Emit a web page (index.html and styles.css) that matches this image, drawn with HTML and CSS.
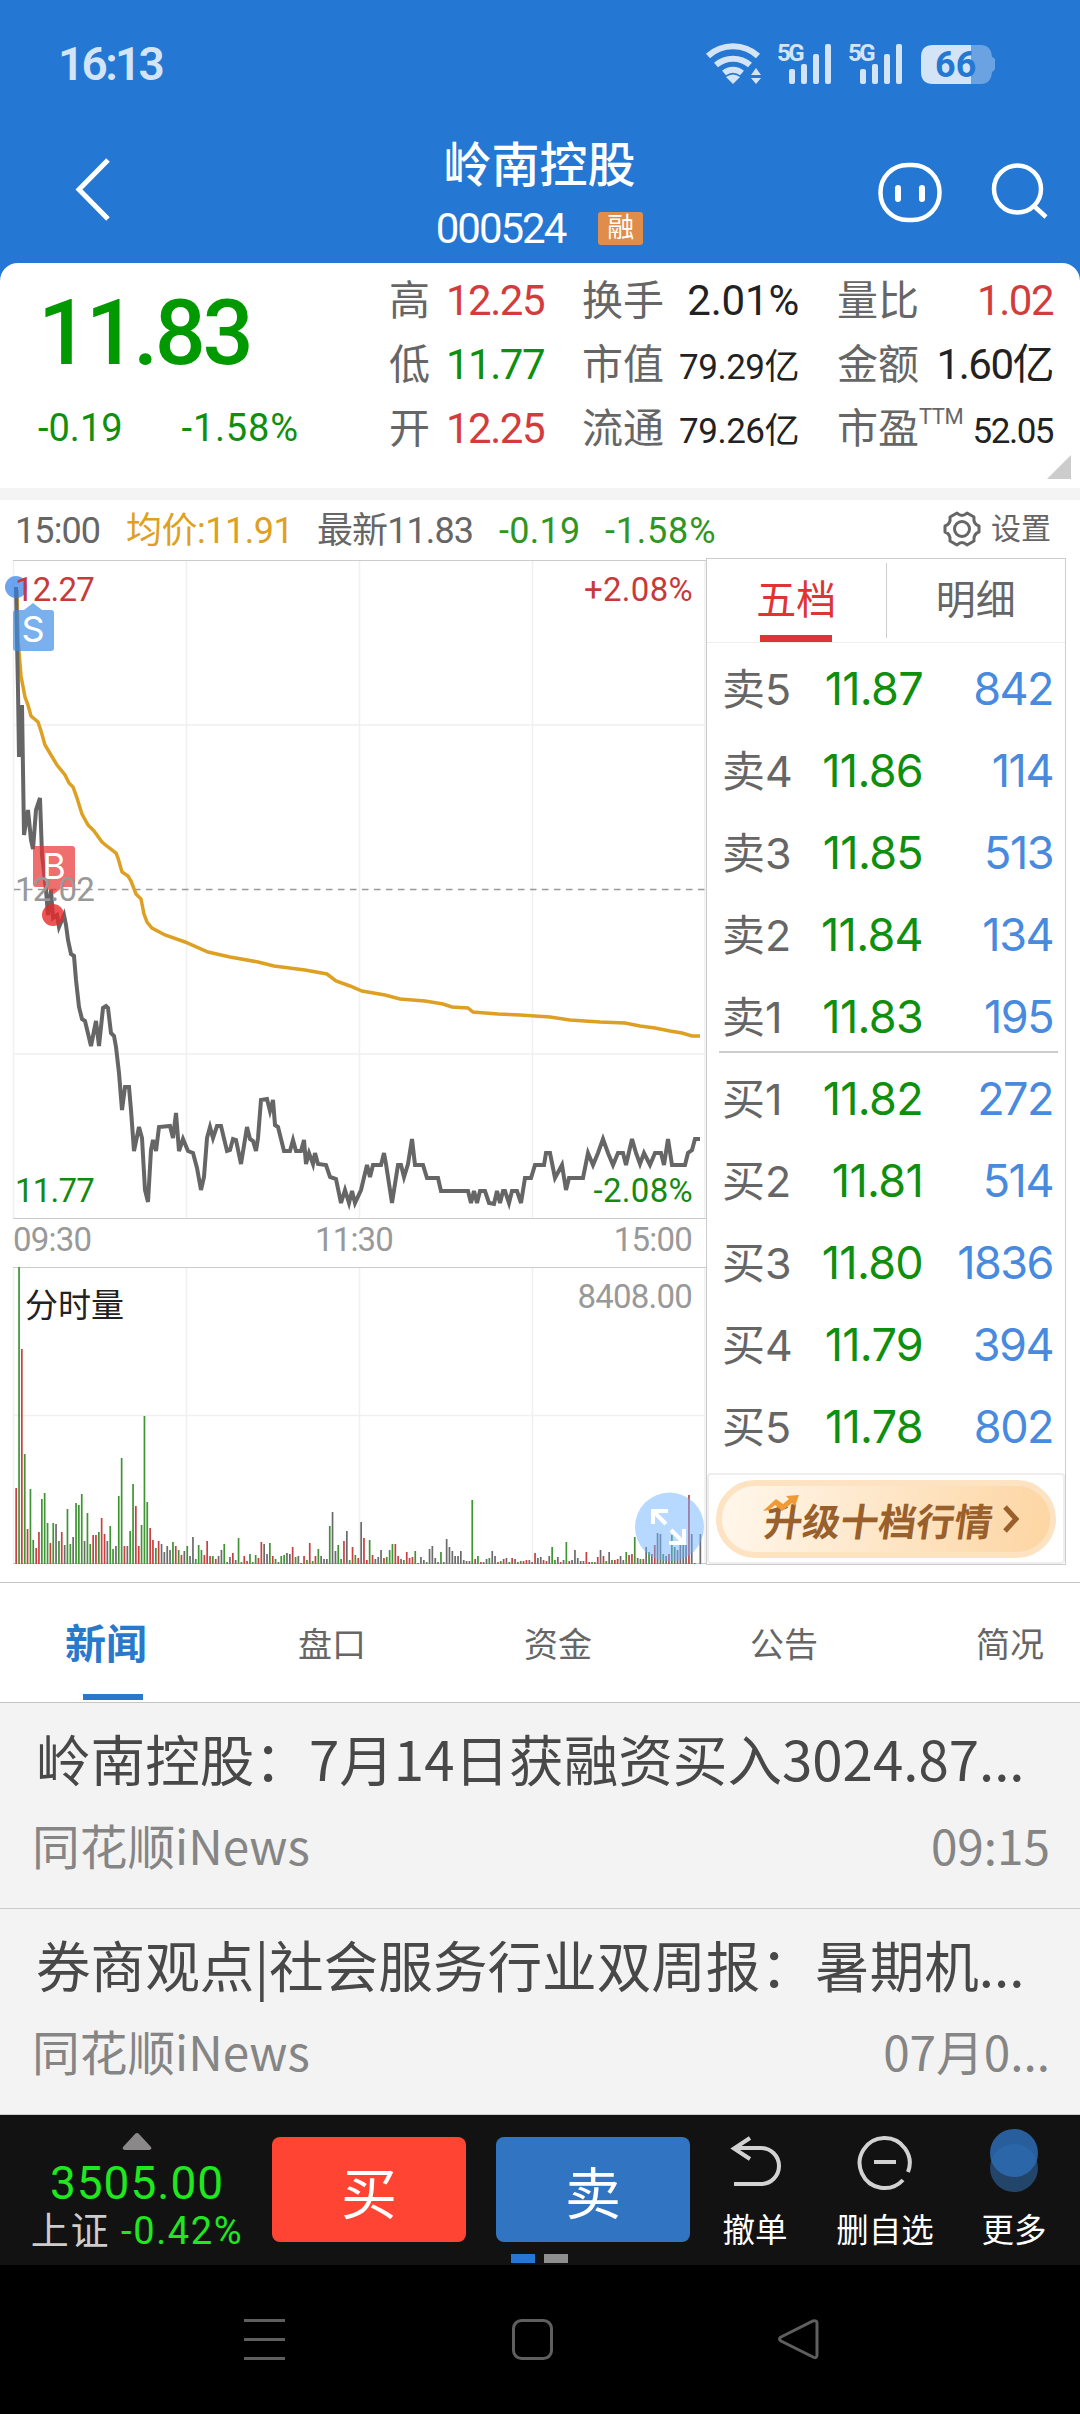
FILE: index.html
```html
<!doctype html>
<html lang="zh-CN">
  <head>
    <meta charset="UTF-8" />
    <meta name="viewport" content="width=device-width, initial-scale=1.0" />
    <title>岭南控股 000524</title>
    <link rel="stylesheet" href="styles.css">
  </head>

  <body>
    <div class="top">
      <div class="statusbar">
        <span class="clock">16:13</span>
        <svg class="status-icons" width="290" height="46" viewBox="705 40 290 46">
          <g fill="none" stroke="#d3e4f6" stroke-width="6">
            <path d="M708 56a37 37 0 0 1 50 0" />
            <path d="M716 65a26 26 0 0 1 34 0" />
            <path d="M724 73a14 14 0 0 1 18 0" />
          </g>
          <g fill="#d3e4f6">
            <path d="M726 77q7-5 14 0l-7 7z" />
            <path d="M751 75l5-7 5 7zM751 78h10l-5 6z" />
            <text class="net" x="777" y="61">5G</text>
            <rect x="789" y="69" width="6" height="15" rx="2" />
            <rect x="801" y="64" width="6" height="20" rx="2" />
            <rect x="813" y="54" width="6" height="30" rx="2" />
            <rect x="825" y="44" width="6" height="40" rx="2" />
            <text class="net" x="848" y="61">5G</text>
            <rect x="860" y="69" width="6" height="15" rx="2" />
            <rect x="872" y="64" width="6" height="20" rx="2" />
            <rect x="884" y="54" width="6" height="30" rx="2" />
            <rect x="896" y="44" width="6" height="40" rx="2" />
            <path d="M971 45H933q-12 0-12 12v15q0 12 12 12h38z" />
          </g>
          <path d="M971 45h10q10 0 11 12 4 1 4 7t-4 8q-1 12-11 12h-10z" fill="#6ba3e2" />
          <text class="battery" x="935" y="77">66</text>
        </svg>
      </div>
      <header class="header">
        <svg width="36" height="66" viewBox="75 157 36 66" class="back">
          <path d="M108 160L79 189.500 108 219" fill="none" stroke="#fff" stroke-width="5" />
        </svg>
        <div class="stock">
          <h1>岭南控股</h1>
          <div class="code">000524<span class="badge">融</span></div>
        </div>
        <svg width="172" height="64" viewBox="876 160 172 64" class="header-icons">
          <g fill="none" stroke="#fff" stroke-width="4.500">
            <rect x="880.500" y="165" width="59" height="55" rx="27" />
            <circle cx="1017.500" cy="189" r="23.500" />
            <path d="M1034 206l12 11" />
            <path d="M898 188v11M922 188v11" stroke-width="6" stroke-linecap="round" />
          </g>
        </svg>
      </header>
    </div>

    <section class="quote">
      <div class="price">
        <strong>11.83</strong>
        <div class="change"><span>-0.19</span><span>-1.58%</span></div>
      </div>
      <dl class="stats">
        <div><dt>高</dt><dd class="red">12.25</dd></div>
        <div><dt>换手</dt><dd class="wide">2.01%</dd></div>
        <div><dt>量比</dt><dd class="red">1.02</dd></div>
        <div><dt>低</dt><dd class="green">11.77</dd></div>
        <div><dt>市值</dt><dd class="small">79.29亿</dd></div>
        <div><dt>金额</dt><dd>1.60亿</dd></div>
        <div><dt>开</dt><dd class="red">12.25</dd></div>
        <div><dt>流通</dt><dd class="small">79.26亿</dd></div>
        <div><dt>市盈<sup>TTM</sup></dt><dd class="small pe">52.05</dd></div>
      </dl>
      <svg class="corner" width="24" height="24"><path d="M24 0v24H0z" fill="#ccc" /></svg>
    </section>

    <div class="infobar">
      <span class="t-time">15:00</span>
      <span class="t-avg">均价:11.91</span>
      <span class="t-last">最新11.83</span>
      <span class="t-diff">-0.19</span>
      <span class="t-pct">-1.58%</span>
      <span class="config">
        <svg width="38" height="38" viewBox="-19 -19 38 38" fill="none" stroke="#666" stroke-width="3">
          <path d="M-5-16Q0-11 5-16L12-12Q11-5 17-3V3Q11 5 12 12L5 16Q0 11-5 16L-12 12Q-11 5-17 3V-3Q-11-5-12-12Z" stroke-linejoin="round" />
          <circle r="7.500" />
        </svg>
        设置
      </span>
    </div>

    <div class="market">
      <svg class="chart" width="706" height="1006" viewBox="0 558 706 1006">
        <!-- grid -->
        <g fill="none" stroke="#f0f0f0" stroke-width="1.500">
          <path d="M13.500 560V1218M186.500 560V1218M359.500 560V1218M532.500 560V1218M705 560V1218" />
          <path d="M13.500 1267V1563M186.500 1267V1563M359.500 1267V1563M532.500 1267V1563M705 1267V1563" />
          <path d="M13 725H706M13 1054H706M13 1415.500H706" />
        </g>
        <path d="M13 560.500H706M13 1218.500H706M13 1267.500H706M13 1563.500H706" stroke="#ccc" />
        <path d="M14 889.500H706" stroke="#999" stroke-width="1.500" stroke-dasharray="6.500 5.500" />

        <polyline class="avg" points="17,590 18,640 21,676 25,697 28,705 31,716 38,722 41,731 45,745 51,755 57,765 65,775 69,783 73,787 77,798 82,814 88,825 94,831 102,842 108,847 116,853 118,858 122,872 128,876 131,881 136,894 141,899 144,914 147,922 152,928 165,935 185,942 208,952 230,957 258,962 274,966 305,970 327,974 336,981 350,986 362,991 385,995 400,999 425,1001 443,1004 452,1007 468,1008 473,1012 498,1014 520,1015 550,1017 570,1020 600,1022 625,1023 640,1026 655,1028 670,1031 682,1033 692,1036 700,1036" />
        <polyline class="last" points="16,587 17,640 18,690 19,757 22,705 24,835 28,810 31,840 33,849 36,810 40,798 42,855 46,890 48,915 51,890 53,918 57,915 59,927 64,915 66,925 68,940 71,954 74,956 76,980 79,1007 82,1019 85,1021 91,1046 96,1021 99,1046 103,1008 106,1006 108,1008 111,1033 114,1036 116,1047 119,1073 122,1110 125,1087 129,1087 131,1110 134,1151 139,1127 142,1138 145,1190 148,1202 151,1150 153,1140 156,1151 159,1127 170,1126 173,1138 176,1113 179,1151 183,1139 188,1151 193,1153 197,1168 201,1190 204,1177 207,1138 210,1127 213,1138 217,1126 221,1126 227,1151 230,1150 233,1139 236,1140 241,1164 247,1127 250,1139 253,1141 256,1151 258,1138 261,1100 267,1099 270,1111 273,1100 275,1125 278,1127 284,1151 290,1151 293,1140 296,1151 301,1151 304,1140 306,1164 309,1153 313,1164 315,1153 318,1164 326,1165 330,1177 336,1179 341,1203 345,1190 349,1203 352,1191 355,1203 361,1190 367,1165 370,1177 373,1165 381,1165 384,1153 386,1164 392,1203 398,1165 401,1165 404,1177 408,1164 412,1139 415,1165 423,1165 427,1178 438,1178 441,1191 468,1191 471,1203 474,1191 477,1203 480,1191 485,1191 489,1203 494,1204 497,1191 500,1203 503,1191 505,1191 509,1203 512,1191 517,1191 521,1203 525,1178 531,1178 535,1165 544,1165 546,1153 550,1153 555,1178 562,1165 566,1190 569,1178 583,1178 588,1153 593,1165 598,1153 603,1139 608,1153 613,1165 618,1153 623,1153 626,1165 632,1139 636,1153 640,1164 644,1153 650,1165 655,1153 661,1153 664,1165 668,1139 672,1165 685,1165 688,1153 692,1150 695,1139 700,1139" />

        <g id="volume"></g>

        <circle cx="16" cy="587" r="11" fill="#2d7fe6" fill-opacity="0.700" />
        <path d="M24 610l9-7 9 7h9q3 0 3 3v35q0 3-3 3H16q-3 0-3-3v-35q0-3 3-3z" fill="#3c8ae8" fill-opacity="0.680" />
        <text class="mark" x="33" y="642">S</text>
        <path d="M36 846h36q3 0 3 3v35q0 3-3 3h-9l-9 7-9-7h-9q-3 0-3-3v-35q0-3 3-3z" fill="#e83030" fill-opacity="0.700" />
        <text class="mark" x="54" y="879">B</text>
        <circle cx="53" cy="915" r="11" fill="#e62b2b" fill-opacity="0.800" />

        <g class="axis">
          <text x="15" y="601" class="fill-red">12.27</text>
          <text x="693" y="601" class="fill-red end pct">+2.08%</text>
          <text x="15" y="901">12.02</text>
          <text x="15" y="1202" class="fill-green">11.77</text>
          <text x="693" y="1202" class="fill-green end pct">-2.08%</text>
          <text x="13" y="1251">09:30</text>
          <text x="354" y="1251" class="middle">11:30</text>
          <text x="692" y="1251" class="end">15:00</text>
          <text x="692" y="1308" class="end">8408.00</text>
          <text x="25" y="1317" class="vol-title">分时量</text>
        </g>

        <circle cx="669.500" cy="1527" r="34.500" fill="#6fb1ff" fill-opacity="0.500" />
        <path d="M666 1524L653 1511M653 1524V1511H668M671 1530L684 1543M684 1529V1543H669" fill="none" stroke="#fff" stroke-width="4" />
      </svg>

      <aside class="book">
        <div class="book-tabs">
          <span class="active">五档</span>
          <span>明细</span>
        </div>
        <ul class="sell">
          <li><span>卖5</span><b>11.87</b><i>842</i></li>
          <li><span>卖4</span><b>11.86</b><i>114</i></li>
          <li><span>卖3</span><b>11.85</b><i>513</i></li>
          <li><span>卖2</span><b>11.84</b><i>134</i></li>
          <li><span>卖1</span><b>11.83</b><i>195</i></li>
        </ul>
        <ul class="buy">
          <li><span>买1</span><b>11.82</b><i>272</i></li>
          <li><span>买2</span><b>11.81</b><i>514</i></li>
          <li><span>买3</span><b>11.80</b><i>1836</i></li>
          <li><span>买4</span><b>11.79</b><i>394</i></li>
          <li><span>买5</span><b>11.78</b><i>802</i></li>
        </ul>
        <div class="upgrade">
          <div class="pill">
            <span>升级十档行情</span>
            <svg width="18" height="28" viewBox="0 0 18 28"><path d="M3 2l11 12L3 26" fill="none" stroke="#99602c" stroke-width="5" /></svg>
            <svg class="trend" width="36" height="18" viewBox="0 0 36 18"><path d="M0 16L13 4l7 5 6-5-3-3 13-1-4 11-3-3-10 8-7-6-6 5z" fill="#ef9a34" /></svg>
          </div>
        </div>
      </aside>
    </div>

    <nav class="tabs">
      <a class="active">新闻</a>
      <a>盘口</a>
      <a>资金</a>
      <a>公告</a>
      <a>简况</a>
    </nav>

    <main class="news">
      <article>
        <h2>岭南控股：7月14日获融资买入3024.87...</h2>
        <p><span>同花顺iNews</span><time>09:15</time></p>
      </article>
      <article>
        <h2>券商观点|社会服务行业双周报：暑期机...</h2>
        <p><span>同花顺iNews</span><time>07月0...</time></p>
      </article>
    </main>

    <footer class="trade">
      <div class="index">
        <svg width="30" height="18"><path d="M13 1q2-2 4 0l12 13q1 3-2 3H3q-3 0-2-3z" fill="#8a8888" /></svg>
        <strong>3505.00</strong>
        <p>上证 <em>-0.42%</em></p>
      </div>
      <button class="btn-buy">买</button>
      <button class="btn-sell">卖</button>
      <div class="action cancel">
        <svg width="56" height="64" viewBox="726 2126 56 64" fill="none" stroke="#d2d2d2" stroke-width="4">
          <path d="M749 2136l-16 10.500 16 10.500M733 2146h27a18 18 0 0 1 0 36h-27" />
        </svg>
        撤单
      </div>
      <div class="action remove">
        <svg width="60" height="64" viewBox="855 2126 60 64" fill="none" stroke="#d2d2d2" stroke-width="4">
          <path d="M908 2170a25 25 0 1 0-5 8M874 2160h22" />
        </svg>
        删自选
      </div>
      <div class="action more">
        <svg width="50" height="64" viewBox="989 2126 50 64">
          <circle cx="1014" cy="2166" r="24" fill="#234569" />
          <circle cx="1014" cy="2151" r="24" fill="#2d6cb5" fill-opacity="0.850" />
        </svg>
        更多
      </div>
      <div class="pager"><span class="on"></span><span></span></div>
    </footer>

    <div class="navbar">
      <svg width="1080" height="149" viewBox="0 2265 1080 149" fill="none" stroke="#5f5f5f" stroke-width="3">
        <path d="M244 2320.500h41M244 2339.500h41M244 2358.500h41" />
        <rect x="513.500" y="2320.500" width="38" height="38" rx="8" />
        <path d="M781 2337L813 2321q4-1 4 2v32q0 4-4 2L781 2341q-3-2 0-4z" />
      </svg>
    </div>
    <script src="chart.js"></script>
  </body>
</html>
```
FILE: chart.js
```javascript
// one bar per minute: height + direction (r up, g down, k flat)
const volume =
  "76r 297g 215r 110g 35r 75g 24g 16r 32r 65g 71g 41g 21r 41g 40k 23g 32r 19k 55g 20g " +
  "27k 61g 59g 70g 23k 51g 20g 29r 29r 32g 46r 30r 23k 38g 15g 18k 68g 106g 18r 18k " +
  "33g 80g 58r 18r 39g 148g 62g 36r 24r 16g 23r 20k 12k 18k 14k 22g 18r 14g 9r 13k " +
  "18g 8k 27k 5g 19g 14g 9r 23r 8r 8g 5r 8k 14k 20g 2g 7k 11r 4k 26g 2g " +
  "8r 3r 10g 2g 9g 6r 22r 20k 10k 21g 8r 5g 2k 8g 9g 11k 10k 17r 7g 8k " +
  "1r 8r 4g 21r 3g 8r 15g 8k 5k 5k 38g 52k 13k 19g 5g 23r 33k 4g 17r 9g " +
  "6r 42k 26r 4r 24g 9r 5k 7k 14k 6r 7g 14g 20g 20r 8r 5k 4g 12r 6r 7r " +
  "13g 1k 7k 4k 2g 15k 18k 6k 2k 12g 2k 25k 17k 13k 8k 8k 13k 4k 3k 3k " +
  "64g 5r 8g 2r 2k 5k 6g 13k 8k 2r 3g 5r 6k 2g 6r 5k 2k 3g 3r 4r " +
  "4k 2k 11r 6k 7k 4r 3r 8k 17g 4g 7k 2r 4k 22g 3r 4k 14k 6k 3k 3k " +
  "12r 2r 2g 2k 7r 14k 8r 3g 12k 4g 4r 5r 8k 4k 12g 9r 10r 27g 6k 5g " +
  "5r 17k 12g 10k 19r 31k 30k 10g 8k 10r 29g 17k 14k 21k 21k 19k 69r 30k 1r 0k 30k";

const colors = { r: "#c94040", g: "#3f9433", k: "#6b6b6b" };
const bars = volume.split(" ");
const step = 684.2 / (bars.length - 1);

document.getElementById("volume").innerHTML = bars
  .map((bar, i) => {
    const h = parseInt(bar, 10);
    const x = (15.3 + i * step).toFixed(1);
    return `<rect x="${x}" y="${1564 - h}" width="1.7" height="${h}" fill="${colors[bar.slice(-1)]}" />`;
  })
  .join("");
```
FILE: styles.css
```css
* {
  box-sizing: border-box;
}
body {
  margin: 0;
  width: 1080px;
  background: #fff;
  color: #222;
  font-family: Roboto, "Noto Sans CJK SC", sans-serif;
}
h1,
h2,
p,
ul,
dl,
dd {
  margin: 0;
  padding: 0;
}
svg {
  display: block;
  flex: none;
}
.red {
  color: #d23c3c;
}
.green {
  color: #0e8f0e;
}

/* blue top */
.top {
  height: 280px;
  background: #2477d3;
}
.statusbar {
  height: 126px;
  padding: 40px 85px 0 58px;
  display: flex;
  justify-content: space-between;
}
.clock {
  font-size: 46px;
  line-height: 48px;
  font-weight: 600;
  letter-spacing: -2.700px;
  color: #d3e4f6;
}
.net {
  font-size: 24px;
  font-weight: 700;
  letter-spacing: -2.500px;
}
.battery {
  font-size: 36px;
  font-weight: 700;
  fill: #2477d3;
}
.header {
  display: flex;
  height: 137px;
  padding: 0 32px 0 75px;
}
.back {
  margin-top: 31px;
}
.stock {
  flex: 1;
  padding-left: 92px;
  text-align: center;
  color: #fff;
}
.header-icons {
  margin-top: 34px;
}
h1 {
  padding-top: 4px;
  font-size: 48px;
  font-weight: 500;
  line-height: 72px;
}
.code {
  display: flex;
  justify-content: center;
  align-items: center;
  font-size: 42px;
  line-height: 53px;
  letter-spacing: -2px;
}
.badge {
  width: 45px;
  height: 33px;
  margin-left: 33px;
  border-radius: 3px;
  background: #e08d4b;
  font-size: 27px;
  line-height: 32px;
  letter-spacing: 0;
}

/* quote summary */
.quote {
  display: flex;
  position: relative;
  height: 225px;
  margin-top: -17px;
  border-radius: 18px 18px 0 0;
  background: #fff;
}
.price {
  width: 389px;
  padding: 15px 0 0 38px;
  color: #009a00;
}
.price strong {
  display: block;
  font-size: 90px;
  font-weight: 500;
  line-height: 112px;
  letter-spacing: -3.500px;
}
.change {
  display: flex;
  gap: 59px;
  margin-top: 16px;
  font-size: 38px;
  line-height: 44px;
  letter-spacing: 0.800px;
  color: #0e8f0e;
}
.change span:first-child {
  letter-spacing: 0;
}
.stats {
  display: grid;
  grid-template-columns: 155px 217px 216px;
  grid-auto-rows: 64px;
  column-gap: 38px;
  width: 664px;
  padding-top: 6px;
}
.stats div {
  display: flex;
  justify-content: space-between;
  align-items: baseline;
  line-height: 64px;
  white-space: nowrap;
}
dt {
  font-size: 41px;
  color: #666;
}
dd {
  font-size: 42px;
  letter-spacing: -1.500px;
}
dd.wide {
  letter-spacing: -0.200px;
}
dd.small {
  font-size: 35px;
  letter-spacing: -0.500px;
}
dd.pe {
  letter-spacing: -1.500px;
}
sup {
  display: inline-block;
  width: 40px;
  font-size: 22px;
  line-height: 22px;
  letter-spacing: -0.500px;
  vertical-align: 19px;
}
.corner {
  position: absolute;
  right: 9px;
  bottom: 9px;
}

/* line above chart */
.infobar {
  display: flex;
  height: 70px;
  border-top: 12px solid #f4f4f4;
  padding-left: 15px;
  font-size: 36px;
  line-height: 62px;
  letter-spacing: -0.900px;
  white-space: nowrap;
  color: #666;
}
.t-time {
  width: 111px;
}
.t-avg {
  width: 191px;
  letter-spacing: -0.500px;
  color: #dea022;
}
.t-last {
  width: 182px;
}
.t-diff {
  width: 106px;
  letter-spacing: 0.300px;
  color: #2f9622;
}
.t-pct {
  letter-spacing: 0.800px;
  color: #2f9622;
}
.config {
  display: flex;
  align-items: center;
  gap: 10px;
  margin-left: auto;
  margin-right: 29px;
  font-size: 30px;
  letter-spacing: 0;
}

/* chart and order book */
.market {
  display: flex;
  height: 1025px;
  border-bottom: 1px solid #c4c4c4;
}
.avg,
.last {
  fill: none;
  stroke: #dea022;
  stroke-width: 3.500;
}
.last {
  stroke: #666;
  stroke-width: 4;
}
.mark {
  font-size: 36px;
  font-family: Inter, sans-serif;
  fill: #fff;
  text-anchor: middle;
}
.axis {
  font-size: 33px;
  letter-spacing: -0.800px;
  fill: #999;
}
.axis .pct {
  letter-spacing: 0.300px;
}
.axis .fill-red {
  fill: #c83a3a;
}
.axis .fill-green {
  fill: #148a14;
}
.axis .end {
  text-anchor: end;
}
.axis .middle {
  text-anchor: middle;
}
.axis .vol-title {
  font-size: 33px;
  letter-spacing: 0;
  fill: #222;
}
.book {
  width: 360px;
  height: 1007px;
  border: 1px solid #ccc;
  font-family: Inter, "Noto Sans CJK SC", sans-serif;
}
.book-tabs {
  display: flex;
  height: 84px;
  border-bottom: 1px solid #eee;
}
.book-tabs span {
  flex: 1;
  padding-top: 11px;
  font-size: 40px;
  line-height: 60px;
  text-align: center;
  color: #666;
}
.book-tabs .active {
  color: #e03434;
}
.book-tabs .active::after {
  content: "";
  display: block;
  width: 72px;
  height: 7px;
  margin: 5px auto 0;
  background: #e03434;
}
.book-tabs span + span {
  height: 75px;
  margin-top: 4px;
  padding-top: 7px;
  border-left: 1px solid #ccc;
}
.book ul {
  list-style: none;
  margin: 0 7px 0 12px;
}
.book li {
  display: flex;
  height: 82px;
  padding: 0 5px 0 3px;
  font-size: 45px;
  line-height: 82px;
  letter-spacing: -1.500px;
}
.book li span {
  width: 84px;
  font-size: 43px;
  letter-spacing: 0;
  color: #666;
}
.book li b {
  width: 117px;
  font-weight: 400;
  letter-spacing: -0.700px;
  text-align: right;
  color: #0e8f0e;
}
.book li i {
  flex: 1;
  font-style: normal;
  text-align: right;
  color: #488ade;
}
.sell {
  padding-top: 5px;
  height: 410px;
  border-bottom: 2px solid #ccc;
}
.buy {
  padding-top: 5px;
}
.upgrade {
  height: 91px;
  margin-top: 5px;
  padding: 5px 7px;
  border: 2px solid #eee;
  border-radius: 4px;
}
.pill {
  display: flex;
  position: relative;
  align-items: center;
  height: 78px;
  padding-left: 43px;
  border: 6px solid #fde3c1;
  border-radius: 39px;
  background: linear-gradient(100deg, #fff7ec, #fdd5a2);
  font-size: 38px;
  font-weight: 700;
  color: #99602c;
}
.pill span {
  margin-right: 9px;
  transform: skewX(-8deg);
}
.trend {
  position: absolute;
  left: 41px;
  top: 9px;
}

/* section tabs */
.tabs {
  display: grid;
  grid-template-columns: repeat(5, 226px);
  height: 120px;
  border-bottom: 1px solid #c4c4c4;
  margin-left: -7px;
  width: 1087px;
  overflow: hidden;
  font-size: 34px;
  line-height: 124px;
  text-align: center;
  color: #666;
}
.tabs .active {
  position: relative;
  font-size: 41px;
  font-weight: 700;
  color: #2878cc;
}
.tabs .active::after {
  content: "";
  position: absolute;
  left: 90px;
  bottom: 7px;
  width: 60px;
  height: 6px;
  background: #2878cc;
}

/* news list */
.news {
  height: 412px;
  background: #f3f3f3;
  font-family: "Noto Sans CJK SC", sans-serif;
}
.news article {
  height: 206px;
  padding: 17px 30px 0 32px;
  border-bottom: 1px solid #ccc;
}
.news h2 {
  padding-left: 4px;
  font-size: 54.600px;
  font-weight: 400;
  line-height: 76px;
  white-space: nowrap;
  color: #484848;
}
.news p {
  display: flex;
  justify-content: space-between;
  margin-top: 11px;
  font-size: 47.700px;
  line-height: 76px;
  color: #858585;
}

/* trade bar */
.trade {
  position: relative;
  display: flex;
  height: 150px;
  background: #121212;
  color: #fff;
}
.index {
  display: flex;
  flex-direction: column;
  align-items: center;
  width: 274px;
  margin-right: -2px;
  padding-top: 18px;
}
.index strong {
  margin-top: 6px;
  font-size: 46px;
  font-weight: 400;
  line-height: 52px;
  letter-spacing: 1px;
  color: #1fe81f;
}
.index p {
  font-size: 38px;
  line-height: 44px;
  color: #ccc;
  letter-spacing: 1.600px;
}
.index em {
  font-style: normal;
  color: #1fe81f;
}
button {
  width: 194px;
  height: 105px;
  margin: 22px 30px 0 0;
  padding: 0;
  border: none;
  border-radius: 8px;
  font-family: inherit;
  font-size: 56px;
  color: #fff;
}
.btn-buy {
  background: #ff4433;
}
.btn-sell {
  background: #3175c2;
}
.action {
  display: flex;
  flex-direction: column;
  align-items: center;
  padding-top: 13px;
  font-size: 32.500px;
  line-height: 78px;
}
.cancel {
  width: 70px;
}
.remove {
  width: 110px;
  margin-left: 40px;
}
.more {
  width: 70px;
  margin-left: 39px;
}
.pager {
  position: absolute;
  left: 511px;
  top: 139px;
  display: flex;
  gap: 9px;
}
.pager span {
  width: 24px;
  height: 9px;
  background: #8f8f8f;
}
.pager .on {
  background: #2477d3;
}
.navbar {
  height: 149px;
  background: #000;
}
```
